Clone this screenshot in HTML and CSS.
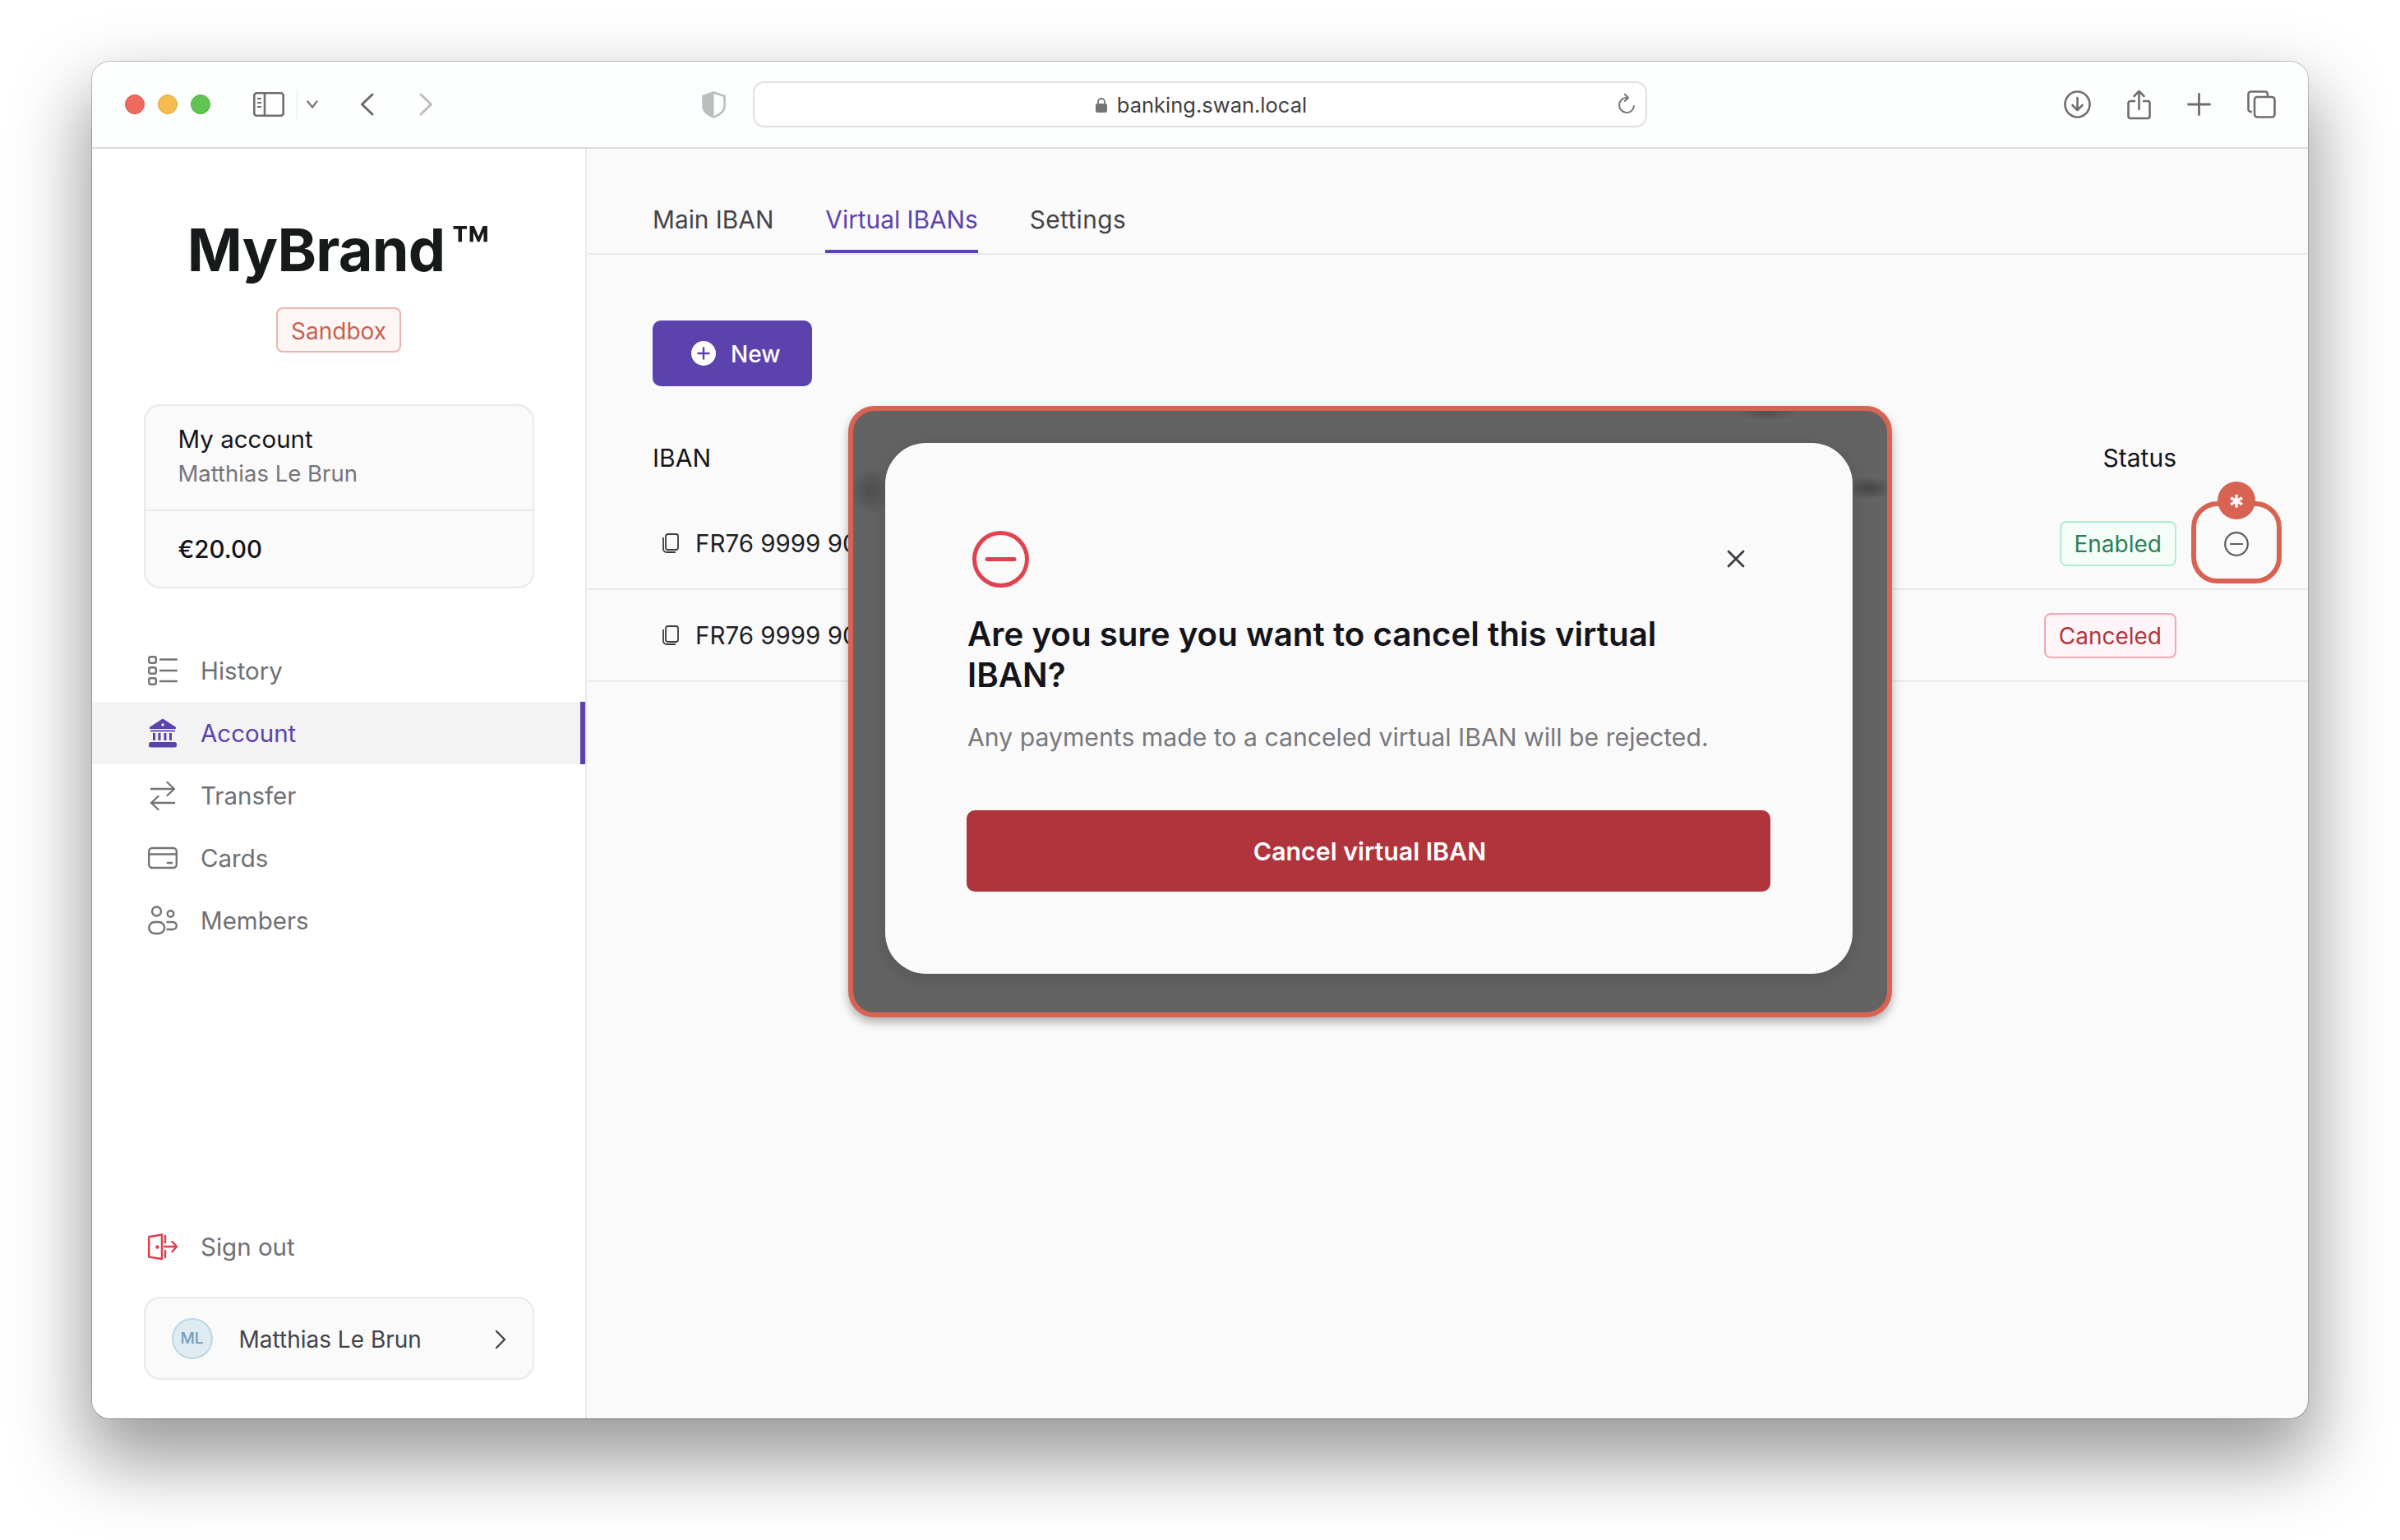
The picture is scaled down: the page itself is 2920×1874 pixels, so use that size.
FILE: index.html
```html
<!DOCTYPE html>
<html lang="en">
<head>
    <meta charset="UTF-8">
    <title>banking.swan.local</title>
    <link rel="stylesheet" href="styles.css">
</head>
<body>

<div class="window">

    <header class="toolbar">
        <div class="dots">
            <span class="dot dot-red"></span>
            <span class="dot dot-yellow"></span>
            <span class="dot dot-green"></span>
        </div>
        <svg class="tb-sidebar" width="38" height="30" viewBox="0 0 38 30" fill="none" stroke="#6e6e6e" stroke-width="2.6">
            <rect x="1.3" y="1.3" width="35.4" height="27.4" rx="3"/>
            <path d="M14 1.3v27.4"/>
            <path d="M5 8h5M5 13h5M5 18h5" stroke-width="2.2"/>
        </svg>
        <span class="tb-sep"></span>
        <svg class="tb-caret" width="14" height="10" viewBox="0 0 14 10" fill="none" stroke="#7c7c82" stroke-width="2.4" stroke-linecap="round" stroke-linejoin="round">
            <path d="M1.5 1.5 7 8.5l5.500-7"/>
        </svg>
        <svg class="tb-back" width="17" height="28" viewBox="0 0 17 28" fill="none" stroke="#6a6a6a" stroke-width="3" stroke-linecap="round" stroke-linejoin="round">
            <path d="M15 2 2.500 14 15 26"/>
        </svg>
        <svg class="tb-forward" width="17" height="28" viewBox="0 0 17 28" fill="none" stroke="#bdbdbd" stroke-width="3" stroke-linecap="round" stroke-linejoin="round">
            <path d="M2 2l12.500 12L2 26"/>
        </svg>
        <svg class="tb-shield" width="29" height="33" viewBox="0 0 29 33" fill="none">
            <path d="M14.500 1.500 27.500 6v13c0 5-6 10-13 12.500C7.500 29 1.500 24 1.500 19V6z" stroke="#bcbebd" stroke-width="2.600"/>
            <path d="M14.500 1.500 1.500 6v13c0 5 6 10 13 12.500z" fill="#bcbebd"/>
        </svg>
        <div class="url-bar">
            <svg width="14" height="18" viewBox="0 0 14 18" fill="#757575">
                <rect x="0" y="7" width="14" height="11" rx="2"/>
                <path d="M3 8V5a4 4 0 0 1 8 0v3" fill="none" stroke="#757575" stroke-width="1.800"/>
            </svg>
            <span>banking.swan.local</span>
            <svg class="reload" width="23" height="26" viewBox="0 0 23 26" fill="none" stroke="#757575" stroke-width="2" stroke-linecap="round" stroke-linejoin="round">
                <path d="M12 5a9 9 0 1 0 9 10"/>
                <path d="M10 1l4 4-4 4"/>
            </svg>
        </div>
        <div class="tb-actions">
            <svg width="33" height="34" viewBox="0 0 33 34" fill="none" stroke="#6e6e6e" stroke-width="2.600" stroke-linecap="round" stroke-linejoin="round">
                <ellipse cx="16.500" cy="17" rx="15" ry="15.500"/>
                <path d="M16.500 9v15M10.500 18l6 6 6-6"/>
            </svg>
            <svg width="29" height="37" viewBox="0 0 29 37" fill="none" stroke="#6e6e6e" stroke-width="2.600" stroke-linecap="round" stroke-linejoin="round">
                <path d="M9 14H4a2.500 2.500 0 0 0-2.500 2.500v16A2.500 2.500 0 0 0 4 35h21a2.500 2.500 0 0 0 2.500-2.500v-16A2.500 2.500 0 0 0 25 14h-5"/>
                <path d="M14.500 24V2M8.500 8l6-6 6 6"/>
            </svg>
            <svg width="29" height="28" viewBox="0 0 29 28" fill="none" stroke="#6e6e6e" stroke-width="2.800" stroke-linecap="round">
                <path d="M14.500 1.500v25M1.500 14h26"/>
            </svg>
            <svg width="35" height="34" viewBox="0 0 35 34" fill="none" stroke="#6e6e6e" stroke-width="2.600" stroke-linejoin="round">
                <path d="M6 26H4.500a3 3 0 0 1-3-3V4.500a3 3 0 0 1 3-3H22a3 3 0 0 1 3 3V8"/>
                <rect x="9" y="8" width="24.500" height="24.500" rx="3.500"/>
            </svg>
        </div>
    </header>

    <div class="app">

        <aside class="sidebar">
            <div class="logo">MyBrand<span class="logo-tm">™</span></div>
            <span class="badge badge-sandbox">Sandbox</span>

            <div class="card account-card">
                <div class="account-top">
                    <div class="account-title">My account</div>
                    <div class="account-owner">Matthias Le Brun</div>
                </div>
                <div class="account-balance">€20.00</div>
            </div>

            <nav class="nav">
                <a class="nav-item">
                    <svg width="36" height="36" viewBox="0 0 36 36" fill="none" stroke="#737378" stroke-width="2.400" stroke-linecap="round">
                        <rect x="1.200" y="1.200" width="8.600" height="7.600" rx="2"/>
                        <rect x="1.200" y="14.200" width="8.600" height="7.600" rx="2"/>
                        <rect x="1.200" y="27.200" width="8.600" height="7.600" rx="2"/>
                        <path d="M15 4.500h20M15 18h20M15 31h20"/>
                    </svg>
                    History
                </a>
                <a class="nav-item nav-item-active">
                    <svg width="36" height="36" viewBox="0 0 36 36" fill="#5c42ad">
                        <path d="M16.800 1.200a2 2 0 0 1 2.400 0l14.600 9.600c1 .7.600 2.200-.6 2.200H2.800c-1.200 0-1.600-1.500-.6-2.200z"/>
                        <circle cx="18" cy="8" r="1.700" fill="#f3f3f3"/>
                        <rect x="6" y="18" width="3" height="9"/>
                        <rect x="12.500" y="18" width="3" height="9"/>
                        <rect x="19.500" y="18" width="3" height="9"/>
                        <rect x="26" y="18" width="3" height="9"/>
                        <rect x="3" y="14.500" width="30" height="1.800"/>
                        <rect x="1" y="29" width="34" height="6.500" rx="2.500"/>
                    </svg>
                    Account
                </a>
                <a class="nav-item">
                    <svg width="36" height="36" viewBox="0 0 36 36" fill="none" stroke="#737378" stroke-width="2.400" stroke-linecap="round" stroke-linejoin="round">
                        <path d="M4 10h28M23.500 2l8.500 8-8.500 8"/>
                        <path d="M32 27H4M12.500 19 4 27l8.500 8"/>
                    </svg>
                    Transfer
                </a>
                <a class="nav-item">
                    <svg width="36" height="36" viewBox="0 0 36 36" fill="none" stroke="#737378" stroke-width="2.400" stroke-linecap="round">
                        <rect x="1.200" y="6" width="33.600" height="24" rx="4"/>
                        <path d="M1.200 13.500h33.600"/>
                        <path d="M24 24h5" stroke-width="2.600"/>
                    </svg>
                    Cards
                </a>
                <a class="nav-item">
                    <svg width="36" height="36" viewBox="0 0 36 36" fill="none" stroke="#737378" stroke-width="2.400" stroke-linecap="round">
                        <circle cx="10.500" cy="7" r="5.500"/>
                        <circle cx="27.500" cy="10" r="3.800"/>
                        <rect x="1.200" y="20" width="19" height="14" rx="7"/>
                        <path d="M23.500 20H30c2.500 0 4.800 1.500 4.800 4.500S32.500 29 30 29h-6.500"/>
                    </svg>
                    Members
                </a>
            </nav>

            <a class="nav-item nav-signout">
                <svg width="36" height="36" viewBox="0 0 36 36" fill="none" stroke="#dc3f4d" stroke-width="2.500" stroke-linecap="round" stroke-linejoin="miter">
                    <path d="M17 3.500 1.200 6v24.500L17 33z"/>
                    <path d="M21 5v8M21 23v8M20 18h15M29.500 12l5.500 6-5.500 6"/>
                    <circle cx="11.500" cy="18.500" r="1" fill="#dc3f4d"/>
                </svg>
                Sign out
            </a>

            <div class="card profile-card">
                <span class="avatar">ML</span>
                <span class="profile-name">Matthias Le Brun</span>
                <svg width="14" height="24" viewBox="0 0 14 24" fill="none" stroke="#444449" stroke-width="2.400" stroke-linecap="round" stroke-linejoin="round">
                    <path d="M2 2l10 10L2 22"/>
                </svg>
            </div>
        </aside>

        <main class="main">
            <div class="tabs">
                <a class="tab">Main IBAN</a>
                <a class="tab tab-active">Virtual IBANs</a>
                <a class="tab tab-settings">Settings</a>
            </div>

            <button class="btn-new">
                <svg width="30" height="30" viewBox="0 0 30 30">
                    <circle cx="15" cy="15" r="15" fill="#fff"/>
                    <path d="M15 8.500v13M8.500 15h13" stroke="#5c42ad" stroke-width="2.400" stroke-linecap="round"/>
                </svg>
                <span>New</span>
            </button>

            <div class="table-head">
                <span>IBAN</span>
                <span>Status</span>
            </div>
            <div class="table-row">
                <span class="iban">
                    <svg width="20" height="24" viewBox="0 0 20 24" fill="none" stroke="#3b3b40" stroke-width="1.800">
                        <rect x="4" y="1" width="15" height="19" rx="2.500"/>
                        <path d="M1 5v14a4 4 0 0 0 4 4h11"/>
                    </svg>
                    FR76 9999 90
                </span>
                <span class="badge badge-enabled">Enabled</span>
            </div>
            <div class="table-row">
                <span class="iban">
                    <svg width="20" height="24" viewBox="0 0 20 24" fill="none" stroke="#3b3b40" stroke-width="1.800">
                        <rect x="4" y="1" width="15" height="19" rx="2.500"/>
                        <path d="M1 5v14a4 4 0 0 0 4 4h11"/>
                    </svg>
                    FR76 9999 90
                </span>
                <span class="badge badge-canceled">Canceled</span>
            </div>
        </main>

        <!-- highlighted action in the first row -->
        <div class="spot">
            <svg width="30" height="30" viewBox="0 0 30 30" fill="none" stroke="#5c5c63" stroke-width="2.200" stroke-linecap="round">
                <circle cx="15" cy="15" r="13.800"/>
                <path d="M8 15h14"/>
            </svg>
            <span class="spot-mark">*</span>
        </div>

        <div class="overlay">
            <div class="modal">
                <svg class="modal-close" width="22" height="22" viewBox="0 0 22 22" fill="none" stroke="#3b3b40" stroke-width="2.800" stroke-linecap="round">
                    <path d="M2 2l18 18M20 2 2 20"/>
                </svg>
                <svg class="modal-icon" width="69" height="69" viewBox="0 0 69 69" fill="none" stroke="#e2414f" stroke-width="5" stroke-linecap="round">
                    <circle cx="34.500" cy="34.500" r="32"/>
                    <path d="M18 34.500h33"/>
                </svg>
                <h2 class="modal-title">Are you sure you want to cancel this virtual IBAN?</h2>
                <p class="modal-text">Any payments made to a canceled virtual IBAN will be rejected.</p>
                <button class="btn-cancel">Cancel virtual IBAN</button>
            </div>
        </div>

    </div>
</div>

</body>
</html>
```

FILE: styles.css
```css
* {
    box-sizing: border-box;
}

body {
    margin: 0;
    height: 1874px;
    padding: 75px 112px 0;
    background: #fff;
    font-family: Inter, "Noto Sans", sans-serif;
    color: #14141a;
}

.window {
    width: 2696px;
    height: 1651px;
    border-radius: 22px;
    background: #fafafb;
    box-shadow: 0 0 0 1px rgba(0, 0, 0, 0.22), 0 44px 90px 8px rgba(0, 0, 0, 0.4);
    display: flex;
    flex-direction: column;
}

/* browser toolbar */
.toolbar {
    height: 106px;
    flex: none;
    display: flex;
    align-items: center;
    padding: 0 39px 0 40px;
    background: #fdfefe;
    border-bottom: 2px solid #dcdcdc;
    border-radius: 22px 22px 0 0;
}

.dots {
    display: flex;
    gap: 16px;
}

.dot {
    width: 24px;
    height: 24px;
    border-radius: 50%;
}

.dot-red { background: #ee6a5f; border: 1px solid #d9574c; }
.dot-yellow { background: #f5bd4f; border: 1px solid #dfa63c; }
.dot-green { background: #61c554; border: 1px solid #4fae43; }

.tb-sidebar { margin-left: 52px; }

.tb-sep {
    width: 1px;
    height: 36px;
    margin-left: 15px;
    background: #e4e4e4;
}

.tb-caret { margin-left: 11px; }
.tb-back { margin-left: 51px; }
.tb-forward { margin-left: 55px; }
.tb-shield { margin-left: 327px; }

.url-bar {
    position: relative;
    width: 1088px;
    height: 56px;
    margin-left: 33px;
    padding: 1px 0 0 3px;
    display: flex;
    align-items: center;
    justify-content: center;
    gap: 12px;
    background: #fff;
    border: 2px solid #e0e0e0;
    border-radius: 14px;
    font-size: 25.500px;
    color: #3f3f42;
}

.reload {
    position: absolute;
    right: 12px;
    top: 13px;
}

.tb-actions {
    margin-left: auto;
    display: flex;
    align-items: center;
    gap: 44px;
}

/* app area */
.app {
    position: relative;
    flex: 1;
    display: flex;
    min-height: 0;
}

.sidebar {
    width: 602px;
    flex: none;
    display: flex;
    flex-direction: column;
    align-items: center;
    padding: 85px 0 47px;
    background: #fff;
    border-right: 2px solid #e9e9ea;
    border-bottom-left-radius: 22px;
}

.logo {
    display: flex;
    align-items: baseline;
    height: 73px;
    font-size: 72px;
    line-height: 1;
    font-weight: 700;
    letter-spacing: -0.800px;
    color: #161a1b;
}

.logo-tm {
    margin-left: 7px;
    font-size: 76px;
    line-height: 72px;
    font-weight: 600;
    letter-spacing: 0;
}

.badge {
    display: inline-flex;
    align-items: center;
    height: 55px;
    padding: 2px 16px 0;
    border: 2px solid;
    border-radius: 8px;
    font-size: 28px;
}

.badge-sandbox {
    margin-top: 35px;
    background: #fdf6f5;
    border-color: #eab5ab;
    color: #c95f4e;
}

.badge-enabled {
    background: #f5fdf9;
    border-color: #b0ecd0;
    color: #2f7d55;
}

.badge-canceled {
    background: #fff4f7;
    border-color: #f2a9b4;
    color: #b0343c;
}

.card {
    width: 475px;
    background: #fafafa;
    border: 2px solid #e9e9ea;
    border-radius: 20px;
}

.account-card {
    margin-top: 63px;
    font-size: 29.500px;
}

.account-top {
    height: 128px;
    padding: 20px 40px 0;
    border-bottom: 2px solid #e9e9ea;
    line-height: 40px;
}

.account-owner {
    margin-top: 2px;
    color: #75757a;
    font-size: 27.500px;
}

.account-balance {
    padding: 24px 40px;
    line-height: 44px;
    font-weight: 500;
}

.nav {
    width: 100%;
    margin-top: 62px;
    margin-bottom: auto;
}

.nav-item {
    display: flex;
    align-items: center;
    gap: 28px;
    width: 100%;
    height: 76px;
    padding-left: 68px;
    font-size: 29.500px;
    color: #6f6f75;
}

.nav-item-active {
    background: #f3f3f3;
    color: #5c42ad;
    border-right: 6px solid #5c42ad;
}

.profile-card {
    height: 101px;
    margin-top: 23px;
    display: flex;
    align-items: center;
    padding: 2px 32px 0;
    font-size: 28px;
    color: #444449;
}

.avatar {
    width: 50px;
    height: 50px;
    flex: none;
    margin-top: -2px;
    display: flex;
    align-items: center;
    justify-content: center;
    border-radius: 50%;
    background: #deecf2;
    border: 2px solid #bcd8e4;
    color: #6ba0ba;
    font-size: 19px;
    font-weight: 500;
}

.profile-name {
    flex: 1;
    margin-left: 32px;
}

/* main column */
.main {
    flex: 1;
    min-width: 0;
}

.tabs {
    height: 129px;
    display: flex;
    align-items: flex-end;
    gap: 63px;
    padding-left: 80px;
    border-bottom: 2px solid #e9e9ea;
}

.tab {
    height: 61px;
    line-height: 40px;
    border-bottom: 4px solid transparent;
    font-size: 29.800px;
    color: #444449;
}

.tab-active {
    color: #5c42ad;
    border-bottom-color: #5c42ad;
}

.tab-settings {
    letter-spacing: 0.400px;
}

.btn-new {
    display: flex;
    align-items: center;
    gap: 18px;
    width: 194px;
    height: 80px;
    margin: 80px 0 0 80px;
    padding: 0 0 0 47px;
    border: 0;
    border-radius: 10px;
    background: #5c42ad;
    color: #fff;
    font-family: inherit;
    font-size: 28px;
    font-weight: 500;
}

.btn-new span {
    padding-top: 2px;
}

.table-head {
    height: 70px;
    margin: 52px 0 14px;
    padding: 0 160px 0 80px;
    display: flex;
    align-items: center;
    justify-content: space-between;
    font-size: 30px;
}

.table-row {
    height: 112px;
    padding: 0 160px 0 80px;
    display: flex;
    align-items: center;
    justify-content: space-between;
    border-bottom: 2px solid #e9e9ea;
}

.iban {
    display: flex;
    align-items: center;
    gap: 20px;
    padding-left: 12px;
    font-size: 29.500px;
    color: #1f1f24;
}

/* ring and marker over the row action */
.spot {
    position: absolute;
    left: 2554px;
    top: 429px;
    width: 110px;
    height: 100px;
    padding-top: 4px;
    display: flex;
    align-items: center;
    justify-content: center;
    border: 6px solid #d96353;
    border-radius: 32px;
}

.spot-mark {
    position: absolute;
    left: 26px;
    top: -30px;
    width: 46px;
    height: 46px;
    border-radius: 50%;
    background: #d96353;
    color: #fff;
    font-size: 38px;
    font-weight: 700;
    line-height: 60px;
    text-align: center;
}

/* dialog, with the blurred backdrop behind it */
.overlay {
    position: absolute;
    left: 920px;
    top: 313px;
    width: 1270px;
    height: 744px;
    padding: 39px 42px 47px 39px;
    border: 6px solid #d96353;
    border-radius: 32px;
    background:
        radial-gradient(ellipse 24px 30px at 20px 97px, rgba(0, 0, 0, 0.22), transparent),
        radial-gradient(ellipse 30px 14px at 1236px 94px, rgba(0, 0, 0, 0.3), transparent),
        radial-gradient(ellipse 40px 10px at 1112px 2px, rgba(0, 0, 0, 0.2), transparent),
        #636363;
    box-shadow: 0 6px 12px rgba(0, 0, 0, 0.3);
}

.modal {
    position: relative;
    height: 100%;
    padding: 107px 100px 0;
    background: #fafafb;
    border-radius: 50px;
    box-shadow: 0 6px 24px rgba(0, 0, 0, 0.14);
}

.modal-close {
    position: absolute;
    left: 1024px;
    top: 130px;
}

.modal-icon {
    display: block;
    margin-left: 6px;
}

.modal-title {
    width: 920px;
    margin: 32px 0 0;
    font-size: 40.300px;
    line-height: 50px;
    font-weight: 600;
}

.modal-text {
    margin: 28px 0 0;
    font-size: 30.200px;
    line-height: 44px;
    color: #78787d;
}

.btn-cancel {
    display: block;
    width: 978px;
    height: 99px;
    margin: 67px 0 0 -1px;
    padding-left: 9px;
    border: 0;
    border-radius: 10px;
    background: #b0343c;
    color: #fff;
    font-family: inherit;
    font-size: 30.300px;
    font-weight: 600;
}
```
